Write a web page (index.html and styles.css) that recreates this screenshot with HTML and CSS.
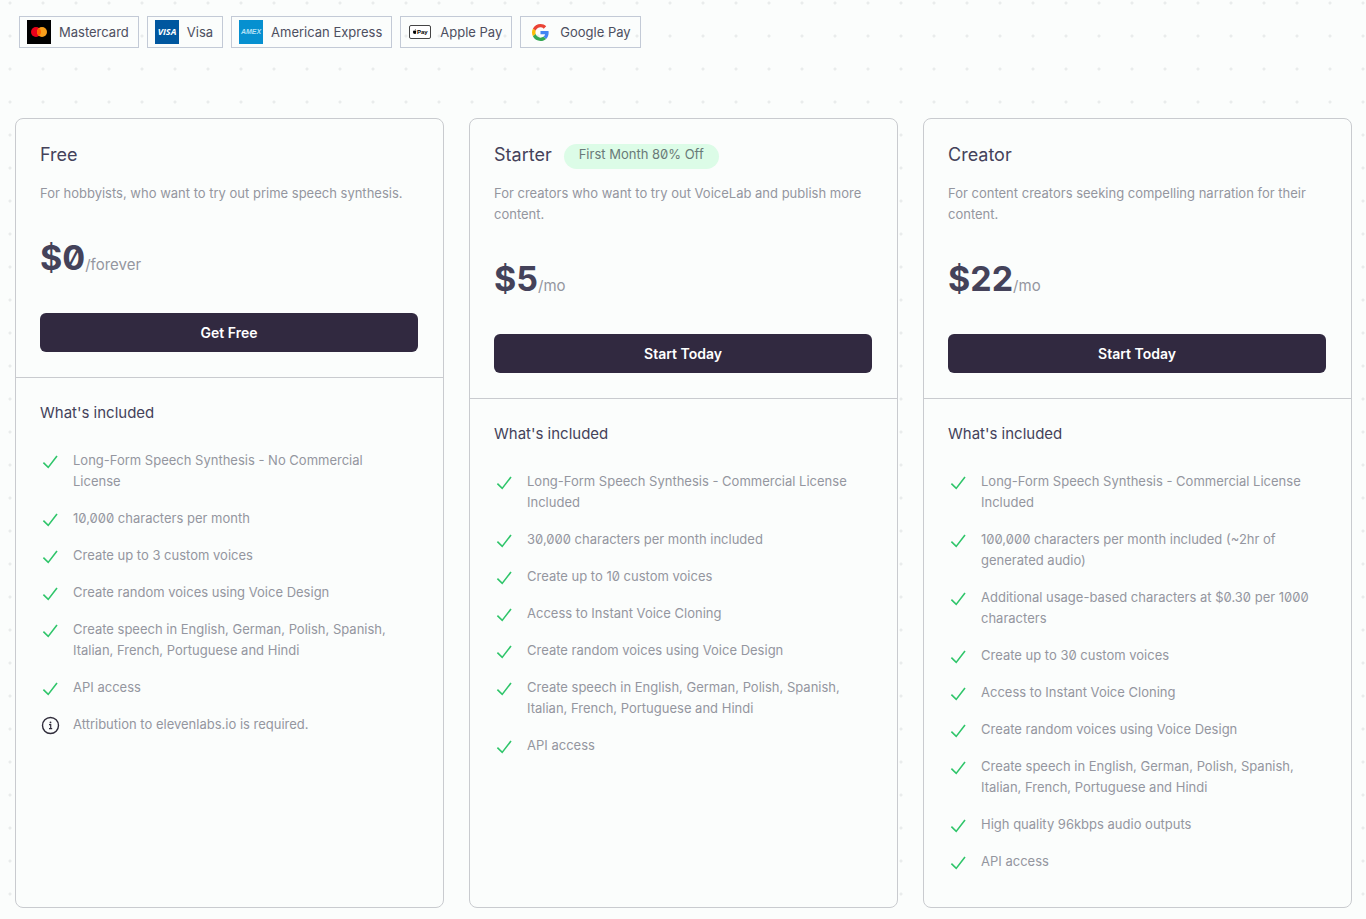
FILE: index.html
```html
<!DOCTYPE html>
<html lang="en">
<head>
<meta charset="utf-8">
<meta name="viewport" content="width=device-width, initial-scale=1">
<title>Pricing</title>
<link rel="stylesheet" href="styles.css">
</head>
<body>
<svg class="sprite" aria-hidden="true">
  <symbol id="check" viewBox="0 0 20 20"><path d="M3.4 11.6 L8.2 16.4 L17 5" fill="none" stroke="#2fc56a" stroke-width="1.6"/></symbol>
  <symbol id="info" viewBox="0 0 20 20"><circle cx="10.5" cy="10.5" r="8" fill="none" stroke="#302d3b" stroke-width="1.4"/><path d="M9 9.6h1.7v3.9M9 13.7h3.2" fill="none" stroke="#302d3b" stroke-width="1.2"/><circle cx="10.5" cy="7.4" r=".9" fill="#302d3b"/></symbol>
</svg>
<main class="page">
  <ul class="methods">
    <li class="method"><svg class="method-icon" viewBox="0 0 24 24" aria-hidden="true"><path fill="#000" d="M0 0h24v24H0z"/><circle cx="9" cy="12" r="5" fill="#eb001b"/><circle cx="15" cy="12" r="5" fill="#f79e1b"/><path d="M12 8a5 5 0 0 1 0 8a5 5 0 0 1 0-8z" fill="#ff5f00"/></svg>Mastercard</li>
    <li class="method"><svg class="method-icon" viewBox="0 0 24 24" aria-hidden="true"><path fill="#00579f" d="M0 0h24v24H0z"/><text class="visa" x="12" y="15" text-anchor="middle">VISA</text></svg>Visa</li>
    <li class="method"><svg class="method-icon" viewBox="0 0 24 24" aria-hidden="true"><path fill="#0690d0" d="M0 0h24v24H0z"/><text class="amex" x="12" y="14" text-anchor="middle">AMEX</text></svg>American Express</li>
    <li class="method"><svg class="method-icon" viewBox="0 0 24 24" aria-hidden="true"><rect x="1.5" y="5.5" width="21" height="13" rx="1.5" fill="#fff" stroke="#444"/><path d="M6.9 10.2c-.1-.6.3-1.1.8-1.2.1.6-.3 1.1-.8 1.2zM8.2 13.1c-.5.9-.9 1-1.4.7-.5.3-1 .2-1.4-.5-.8-1.3-.3-2.9.7-2.8l.7.2.8-.2c.5 0 .8.3.9.5-.8.6-.7 1.5-.3 2.1z" fill="#000"/><text class="apay" x="8.9" y="13.9">Pay</text></svg>Apple Pay</li>
    <li class="method"><svg class="method-icon" viewBox="0 0 24 24" aria-hidden="true"><g transform="translate(4 4) scale(.354)"><path fill="#EA4335" d="M24 9.5c3.54 0 6.71 1.22 9.21 3.6l6.85-6.85C35.9 2.38 30.47 0 24 0 14.62 0 6.51 5.38 2.56 13.22l7.98 6.19C12.43 13.72 17.74 9.5 24 9.5z"/><path fill="#4285F4" d="M46.98 24.55c0-1.57-.15-3.09-.38-4.55H24v9.02h12.94c-.58 2.96-2.26 5.48-4.78 7.18l7.73 6c4.51-4.18 7.09-10.36 7.09-17.65z"/><path fill="#FBBC05" d="M10.53 28.59A14.5 14.5 0 0 1 9.77 24c0-1.6.27-3.14.76-4.59l-7.98-6.19A23.9 23.9 0 0 0 0 24c0 3.88.92 7.54 2.56 10.78z"/><path fill="#34A853" d="M24 48c6.48 0 11.93-2.13 15.89-5.81l-7.73-6c-2.15 1.45-4.92 2.3-8.16 2.3-6.26 0-11.57-4.22-13.47-9.91l-7.98 6.19C6.51 42.62 14.62 48 24 48z"/></g></svg>Google Pay</li>
  </ul>

  <div class="plans">
    <section class="plan">
      <header class="plan-head">
        <h2 class="plan-name">Free</h2>
        <p class="plan-desc">For hobbyists, who want to try out prime speech synthesis.</p>
        <p class="price"><strong class="amount">$0</strong><span class="period">/forever</span></p>
        <button class="cta" type="button">Get Free</button>
      </header>
      <div class="plan-body">
        <h3 class="included">What's included</h3>
        <ul class="features">
          <li class="feature"><svg class="icon"><use href="#check"/></svg><span>Long-Form Speech Synthesis - No Commercial License</span></li>
          <li class="feature"><svg class="icon"><use href="#check"/></svg><span>10,000 characters per month</span></li>
          <li class="feature"><svg class="icon"><use href="#check"/></svg><span>Create up to 3 custom voices</span></li>
          <li class="feature"><svg class="icon"><use href="#check"/></svg><span>Create random voices using Voice Design</span></li>
          <li class="feature"><svg class="icon"><use href="#check"/></svg><span>Create speech in English, German, Polish, Spanish, Italian, French, Portuguese and Hindi</span></li>
          <li class="feature"><svg class="icon"><use href="#check"/></svg><span>API access</span></li>
          <li class="feature"><svg class="icon"><use href="#info"/></svg><span>Attribution to elevenlabs.io is required.</span></li>
        </ul>
      </div>
    </section>

    <section class="plan">
      <header class="plan-head">
        <h2 class="plan-name">Starter <span class="badge">First Month 80% Off</span></h2>
        <p class="plan-desc">For creators who want to try out VoiceLab and publish more content.</p>
        <p class="price"><strong class="amount">$5</strong><span class="period">/mo</span></p>
        <button class="cta" type="button">Start Today</button>
      </header>
      <div class="plan-body">
        <h3 class="included">What's included</h3>
        <ul class="features">
          <li class="feature"><svg class="icon"><use href="#check"/></svg><span>Long-Form Speech Synthesis - Commercial License Included</span></li>
          <li class="feature"><svg class="icon"><use href="#check"/></svg><span>30,000 characters per month included</span></li>
          <li class="feature"><svg class="icon"><use href="#check"/></svg><span>Create up to 10 custom voices</span></li>
          <li class="feature"><svg class="icon"><use href="#check"/></svg><span>Access to Instant Voice Cloning</span></li>
          <li class="feature"><svg class="icon"><use href="#check"/></svg><span>Create random voices using Voice Design</span></li>
          <li class="feature"><svg class="icon"><use href="#check"/></svg><span>Create speech in English, German, Polish, Spanish, Italian, French, Portuguese and Hindi</span></li>
          <li class="feature"><svg class="icon"><use href="#check"/></svg><span>API access</span></li>
        </ul>
      </div>
    </section>

    <section class="plan">
      <header class="plan-head">
        <h2 class="plan-name">Creator</h2>
        <p class="plan-desc">For content creators seeking compelling narration for their content.</p>
        <p class="price"><strong class="amount">$22</strong><span class="period">/mo</span></p>
        <button class="cta" type="button">Start Today</button>
      </header>
      <div class="plan-body">
        <h3 class="included">What's included</h3>
        <ul class="features">
          <li class="feature"><svg class="icon"><use href="#check"/></svg><span>Long-Form Speech Synthesis - Commercial License Included</span></li>
          <li class="feature"><svg class="icon"><use href="#check"/></svg><span>100,000 characters per month included (~2hr of generated audio)</span></li>
          <li class="feature"><svg class="icon"><use href="#check"/></svg><span>Additional usage-based characters at $0.30 per 1000 characters</span></li>
          <li class="feature"><svg class="icon"><use href="#check"/></svg><span>Create up to 30 custom voices</span></li>
          <li class="feature"><svg class="icon"><use href="#check"/></svg><span>Access to Instant Voice Cloning</span></li>
          <li class="feature"><svg class="icon"><use href="#check"/></svg><span>Create random voices using Voice Design</span></li>
          <li class="feature"><svg class="icon"><use href="#check"/></svg><span>Create speech in English, German, Polish, Spanish, Italian, French, Portuguese and Hindi</span></li>
          <li class="feature"><svg class="icon"><use href="#check"/></svg><span>High quality 96kbps audio outputs</span></li>
          <li class="feature"><svg class="icon"><use href="#check"/></svg><span>API access</span></li>
        </ul>
      </div>
    </section>
  </div>
</main>
</body>
</html>
```
FILE: styles.css
```css
* { box-sizing: border-box; margin: 0; padding: 0; }

body {
  font-family: Inter, "Liberation Sans", sans-serif;
  font-feature-settings: "zero";
  font-size: 13px;
  line-height: 21px;
  color: #94969f;
  background: #fbfdfc radial-gradient(circle at 17px 17px, #e9ecec 1px, transparent 2px) -7px -14px / 33px 33px;
}

ul { list-style: none; }
.sprite { display: none; }

.page { padding: 16px 14px 12px 15px; }

.methods { display: flex; flex-wrap: wrap; gap: 8px; padding-left: 4px; }
.method {
  display: flex;
  align-items: center;
  gap: 8px;
  height: 32px;
  padding: 0 9px 0 7px;
  border: 1px solid #c3cad6;
  color: #4d4f60;
}
.method-icon { width: 24px; height: 24px; flex: none; }
.visa { font: italic bold 9px "Open Sans", sans-serif; fill: #fff; }
.amex { font: italic bold 7px "Liberation Sans", sans-serif; fill: #b5e2f7; }
.apay { font: bold 6px "Liberation Sans", sans-serif; fill: #000; }

.plans {
  display: grid;
  grid-template-columns: repeat(auto-fit, minmax(340px, 1fr));
  gap: 25px;
  margin-top: 70px;
}
.plan { border: 1px solid #c9cbcf; border-radius: 8px; background: #fbfdfc; }
.plan-head { padding: 24px 25px 25px 24px; border-bottom: 1px solid #c9cbcf; }

.plan-name {
  display: flex;
  align-items: flex-start;
  gap: 12px;
  min-height: 26px;
  font-size: 18px;
  line-height: 24px;
  font-weight: 400;
  color: #44425a;
}
.badge {
  margin-top: 1px;
  padding: 0 15px 4px;
  border-radius: 13px;
  background: #dcfce7;
  font-size: 13px;
  line-height: 21px;
  color: #697a78;
}
.plan-desc { margin-top: 14px; }

.price { margin-top: 34px; line-height: 40px; }
.amount { font-size: 34px; font-weight: 700; color: #44425a; }
.period { font-size: 15px; line-height: 16px; }

.cta {
  display: block;
  width: 100%;
  height: 39px;
  margin-top: 28px;
  border: 0;
  border-radius: 6px;
  background: #312940;
  font: 600 14px Inter, "Liberation Sans", sans-serif;
  color: #fff;
  cursor: pointer;
}

.plan-body { padding: 23px 32px 35px 24px; }
.included { font-size: 15px; line-height: 24px; font-weight: 400; color: #44425a; }
.features { display: grid; gap: 16px; margin-top: 25px; }
.feature { display: flex; gap: 13px; }
.icon { flex: none; width: 20px; height: 20px; margin-top: 1px; }
```
